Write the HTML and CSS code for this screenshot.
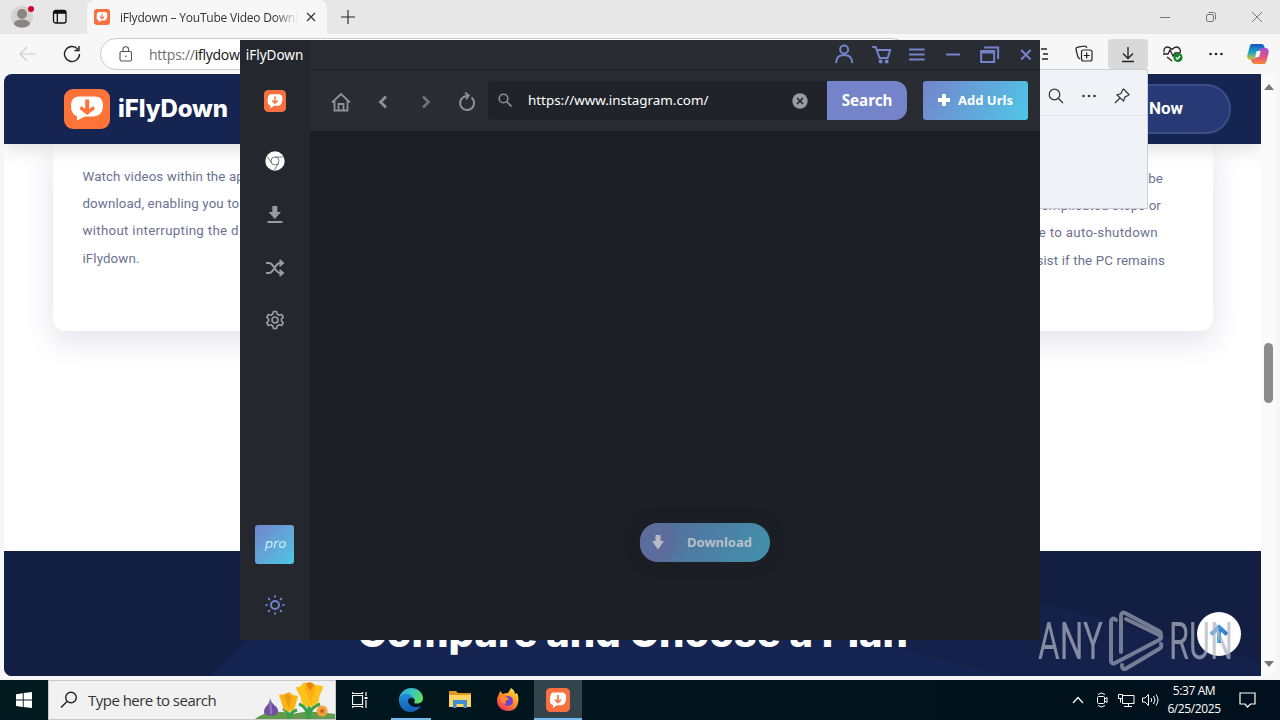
FILE: index.html
```html
<!DOCTYPE html>
<html lang="en">
<head>
<meta charset="utf-8">
<title>iFlyDown</title>
<link rel="stylesheet" href="styles.css">
</head>
<body>
<svg class="defs" width="0" height="0">
  <defs>
    <symbol id="logo" viewBox="0 0 46 40">
      <rect width="46" height="40" rx="9" fill="#ff7338"/>
      <path d="M15 7.500h16c5 0 8 3 8 9 0 7-4 11-10 11h-8L13 31.500V27C9 26 7 22 7 17c0-6 3-9.500 8-9.500z" fill="#fff"/>
      <path d="M21.200 10.500h4v9.500l4-3 1.800 3-7.800 6-7.700-6 1.700-3 4 3z" fill="#ff7338"/>
    </symbol>
    <symbol id="logo-sq" viewBox="0 0 24 24">
      <rect width="24" height="24" rx="4.500" fill="#f8703f"/>
      <path d="M8 4.500h8c3.500 0 4.500 2.500 4 6.500s-2 6.300-5 6.300h-4L7 20v-3C4 16 3.500 13.500 4 10s1.200-5.500 4-5.500z" fill="#fff"/>
      <path d="M12 7v7M9 11.500l3 3 3-3" fill="none" stroke="#f8703f" stroke-width="1.600"/>
    </symbol>
    <linearGradient id="cop1" x1="0" y1="0" x2="0" y2="1"><stop offset="0" stop-color="#1b4fc4"/><stop offset=".5" stop-color="#16a5c9"/><stop offset="1" stop-color="#e5c22e"/></linearGradient>
    <linearGradient id="cop2" x1="0" y1="0" x2="0" y2="1"><stop offset="0" stop-color="#a34fd6"/><stop offset=".6" stop-color="#e8547d"/><stop offset="1" stop-color="#f68a35"/></linearGradient>
    <linearGradient id="edge1" x1="0" y1="0" x2="1" y2=".4"><stop offset="0" stop-color="#2aa5dc"/><stop offset=".6" stop-color="#38c9b5"/><stop offset="1" stop-color="#62dc62"/></linearGradient>
    <linearGradient id="edge2" x1="0" y1="0" x2="0" y2="1"><stop offset="0" stop-color="#1f8edb"/><stop offset="1" stop-color="#145eb4"/></linearGradient>
    <linearGradient id="fox" x1=".9" y1="0" x2=".2" y2="1"><stop offset="0" stop-color="#fff04a"/><stop offset=".45" stop-color="#ff9626"/><stop offset="1" stop-color="#f0305f"/></linearGradient>
    <linearGradient id="up" x1="0" y1="0" x2="1" y2="0"><stop offset="0" stop-color="#54b5ec"/><stop offset="1" stop-color="#2b78d4"/></linearGradient>
  </defs>
</svg>
<div class="desktop">
  <section class="browser">
    <header class="tabs">
      <svg class="avatar" width="26" height="26" viewBox="0 0 26 26"><circle cx="12" cy="13" r="11" fill="#d5d3d1"/><circle cx="12" cy="10" r="5" fill="#898582"/><ellipse cx="12" cy="19.500" rx="8" ry="4" fill="#898582"/><circle cx="21" cy="5" r="3" fill="#d2062c"/></svg>
      <svg class="workspaces" width="16" height="16" viewBox="0 0 16 16" fill="none" stroke="#111" stroke-width="1.300"><rect x="1.500" y="1.500" width="12.500" height="12.500" rx="2"/><path d="M2 4h12M5.300 4v10M2 2.500h12" /></svg>
      <div class="tab">
        <svg width="16" height="16"><use href="#logo-sq"/></svg>
        <span class="tab-title">iFlydown – YouTube Video Downl</span>
        <svg class="tab-close" width="10" height="10" viewBox="0 0 10 10" stroke="#333" stroke-width="1.200"><path d="M1 1l8 8M9 1l-8 8"/></svg>
      </div>
      <svg class="new-tab" width="14" height="14" viewBox="0 0 14 14" stroke="#222" stroke-width="1.100"><path d="M7 0v14M0 7h14"/></svg>
      <div class="window-buttons">
        <svg width="46" height="34" fill="none" stroke="#777"><path d="M18 17.500h10"/></svg>
        <svg width="46" height="34" fill="none" stroke="#777"><rect x="18.500" y="14.500" width="7" height="7" rx="1.500"/><path d="M20.500 12.500h5a2 2 0 0 1 2 2v5"/></svg>
        <svg width="46" height="34" fill="none" stroke="#777"><path d="M18 12l10 10M28 12l-10 10"/></svg>
      </div>
    </header>
    <div class="toolbar">
      <svg class="back" width="18" height="16" viewBox="0 0 18 16" fill="none" stroke="#ccc" stroke-width="1.200"><path d="M17 8H1M8 1L1 8l7 7"/></svg>
      <svg class="refresh" width="18" height="18" viewBox="0 0 18 18" fill="none" stroke="#222" stroke-width="1.400"><path d="M16.500 9A7.500 7.500 0 1 1 14.800 4.300M16 1v4.500h-4.500"/></svg>
      <div class="address">
        <svg width="14" height="16" viewBox="0 0 14 16" fill="none" stroke="#555" stroke-width="1.100"><rect x="1" y="5.500" width="11.500" height="9.500" rx="1.500"/><path d="M4 5.500V3.500a2.800 2.800 0 0 1 5.600 0v2"/><circle cx="6.800" cy="10.200" r=".7" fill="#333" stroke="none"/></svg>
        <span><i>https://</i>iflydow</span>
      </div>
      <div class="actions">
        <svg width="44" height="30" fill="none" stroke="#222" stroke-width="1.300"><path d="M15 9l7 10M23 10h6M25 15h5M24 20h6"/></svg>
        <svg width="44" height="30" fill="none" stroke="#222" stroke-width="1.200"><path d="M18 20l-2-1.500L14 10.500c-.3-1.200.5-2 2-2.300l6.500-1.200c1.500 0 2 .7 2.300 2"/><rect x="19.500" y="11" width="10.500" height="11" rx="2"/><path d="M24.700 13.500v6M21.700 16.500h6"/></svg>
        <div class="active"><svg width="40" height="30" fill="none" stroke="#222" stroke-width="1.300"><path d="M20 8v11M15 14.500l5 5 5-5M14 22.500h12"/></svg></div>
        <svg width="44" height="30" fill="none" stroke="#222" stroke-width="1.300"><path d="M22 22l-5-4M30 14c1.500-3-1-6-3.500-6-2 0-3 1-4.500 2.500C20.500 9 19.500 8 17.500 8c-2.500 0-4.500 2.500-3.300 5.500M13 15h5l2-4 3 6 2-3h5"/><circle cx="28" cy="18.500" r="4.600" fill="#16822a" stroke="none"/><path d="M25.800 18.500l1.600 1.500 2.700-3" stroke="#fff"/></svg>
        <svg width="44" height="30" fill="#222"><circle cx="16.500" cy="15" r="1.300"/><circle cx="22" cy="15" r="1.300"/><circle cx="27.500" cy="15" r="1.300"/></svg>
        <svg width="40" height="30" viewBox="0 0 40 30"><path d="M14 5h9c2 0 3 1 3.500 3l.5 2h-3c-2 0-3 1-3.500 3l-2 6c-.6 1.500-1.500 2-3 2h-2c-3.500 0-5-2-4-5.500l2-7C12 6 12.500 5 14 5z" fill="url(#cop1)"/><path d="M26 25h-9c-2 0-3-1-3.500-3l-.5-2h3c2 0 3-1 3.500-3l2-6c.6-1.500 1.500-2 3-2h2c3.500 0 5 2 4 5.500l-2 7c-.5 2.500-1 3.500-2.500 3.500z" fill="url(#cop2)"/><path d="M18.700 12h4l-1.600 6h-4z" fill="#f7f7f7"/></svg>
      </div>
    </div>
    <div class="viewport">
      <div class="page">
        <div class="site-head">
          <svg width="46" height="40"><use href="#logo"/></svg>
          <b>iFlyDown</b>
          <div class="cta">Now</div>
        </div>
        <div class="cards">
          <p class="card-left">Watch videos within the ap<br>download, enabling you to<br><span class="wide">without interrupting the d</span><br>iFlydown.</p>
          <p class="card-right"><span class="in-2">be</span><span class="in-4">complicated steps or</span><span class="in-7 wide">e to auto-shutdown</span><span>sist if the PC remains</span></p>
        </div>
        <div class="plans"><h2>Compare and Choose a Plan</h2></div>
      </div>
      <div class="scrollbar">
        <svg width="10" height="6"><path d="M0 6l5-6 5 6z" fill="#777"/></svg>
        <div class="thumb"></div>
        <svg width="10" height="6"><path d="M0 0l5 6 5-6z" fill="#777"/></svg>
      </div>
    </div>
  </section>

  <aside class="flyout">
    <svg width="16" height="16" viewBox="0 0 16 16" fill="none" stroke="#333" stroke-width="1.200"><circle cx="6.500" cy="6.500" r="5.300"/><path d="M10.500 10.500l4.500 4.500"/></svg>
    <svg width="16" height="16" fill="#333"><circle cx="2.500" cy="8" r="1.300"/><circle cx="8" cy="8" r="1.300"/><circle cx="13.500" cy="8" r="1.300"/></svg>
    <svg width="16" height="16" viewBox="0 0 16 16" fill="none" stroke="#333" stroke-width="1.200"><path d="M9.500 1L15 6.500l-1 1-3 1.500-1.500 4L3 7l4-1.500L8.500 2zM6 10l-5 5"/></svg>
  </aside>

  <section class="app">
    <nav class="side">
      <span class="app-name">iFlyDown</span>
      <svg class="side-logo" width="22" height="22"><use href="#logo-sq"/></svg>
      <svg class="side-chrome" width="20" height="20" viewBox="0 0 20 20"><circle cx="10" cy="10" r="9.700" fill="#fff"/><g fill="none" stroke="#555b63" stroke-width=".8"><circle cx="10" cy="10" r="4"/><path d="M10 6h8.500M6.500 12L2.500 5.500M13.500 12L9.500 19"/></g></svg>
      <svg class="side-down" width="16" height="18" viewBox="0 0 16 18" fill="#989ba1"><path d="M5.300 0h5v6H14l-6.200 7L1.600 6h3.700zM.5 15h15v2H.5z"/></svg>
      <svg class="side-shuffle" width="20" height="18" viewBox="0 0 20 18" fill="none" stroke="#989ba1" stroke-width="2"><path d="M1 4h3c5 0 6 10 11 10h2M1 14h3c5 0 6-10 11-10h2M14.500 1l3.500 3-3.500 3M14.500 11l3.500 3-3.500 3"/></svg>
      <svg class="side-gear" width="20" height="20" viewBox="0 0 20 20" fill="none" stroke="#989ba1" stroke-width="1.700"><path d="M8.500 1.500h3l.7 2.500 2 1.200 2.500-.7 1.500 2.600L16.500 9v2l1.700 1.900-1.500 2.600-2.500-.7-2 1.200-.7 2.500h-3L7.800 16l-2-1.200-2.500.7-1.500-2.600L3.500 11V9L1.800 7.100l1.500-2.600 2.500.7L7.800 4z" stroke-linejoin="round"/><circle cx="10" cy="10" r="3"/></svg>
      <div class="pro">pro</div>
      <svg class="side-sun" width="20" height="20" viewBox="-10 -10 20 20" fill="none" stroke="#7483cd" stroke-width="2" stroke-linecap="round"><circle r="4"/><path d="M0-8.700v.5M0 8.200v.5M-8.700 0h.5M8.200 0h.5M-6.200-6.200l.5.500M5.700 5.700l.5.500M6.200-6.200l-.5.500M-5.700 5.700l-.5.500"/></svg>
    </nav>
    <div class="main">
      <div class="titlebar">
        <svg viewBox="0 0 36 28"><circle cx="18" cy="9.500" r="4"/><path d="M10 23c0-5 3-8 8-8s8 3 8 8"/></svg>
        <svg viewBox="0 0 36 28"><path d="M9 7h3.500l4 11h8L27 10H13.500"/><circle cx="17.500" cy="21.500" r="1"/><circle cx="23.500" cy="21.500" r="1"/></svg>
        <svg viewBox="0 0 36 28"><path d="M10 9.500h15.500M10 14.500h15.500M10 19.500h15.500"/></svg>
        <svg viewBox="0 0 36 28"><path d="M11 14.500h14"/></svg>
        <svg viewBox="0 0 36 28"><rect x="10" y="11" width="13" height="11"/><path d="M10 12.500h13M13 7.500h14V19"/></svg>
        <svg viewBox="0 0 36 28"><path d="M13 10l9.500 9.500M22.500 10L13 19.500"/></svg>
      </div>
      <div class="nav">
        <svg width="20" height="20" viewBox="0 0 20 20" fill="none" stroke="#8f9298" stroke-width="1.800"><path d="M1 10.500L10 2l9 8.500M3.500 9v9.500h13V9M7.500 18v-6h5v6"/></svg>
        <svg class="prev" width="10" height="14" viewBox="0 0 10 14" fill="none" stroke="#8f9298" stroke-width="2.800"><path d="M8 1.500L2.500 7 8 12.500"/></svg>
        <svg class="next" width="10" height="14" viewBox="0 0 10 14" fill="none" stroke="#70747a" stroke-width="2.600"><path d="M2 1.500L7.500 7 2 12.500"/></svg>
        <svg class="reload" width="18" height="20" viewBox="0 0 18 20" fill="none" stroke="#8f9298" stroke-width="2"><path d="M13.500 5.500A7 7 0 1 1 5.500 5L10 3.500"/><path d="M7 .5L11 3.500 8 7.500" stroke-width="1.600"/></svg>
        <div class="url">
          <svg width="14" height="14" viewBox="0 0 14 14" fill="none" stroke="#8b8e93" stroke-width="1.600"><circle cx="5.500" cy="5.500" r="4.300"/><path d="M8.500 8.500l5 5"/></svg>
          <span>https://www.instagram.com/</span>
          <svg class="clear" width="16" height="16" viewBox="0 0 16 16"><circle cx="8" cy="8" r="7.700" fill="#9a9ca1"/><path d="M5 5l6 6M11 5l-6 6" stroke="#20232a" stroke-width="1.600"/></svg>
        </div>
        <div class="search">Search</div>
        <div class="add"><svg width="12" height="12" stroke="#fff" stroke-width="3.800"><path d="M6 0v12M0 6h12"/></svg>Add Urls</div>
      </div>
      <div class="content">
        <div class="download"><span class="knob"><svg width="12" height="15" viewBox="0 0 12 15" fill="#b7bbc3"><path d="M3.500 0h5v6H12l-6 8.500L0 6h3.500z"/></svg></span><b>Download</b></div>
      </div>
    </div>
  </section>

  <div class="to-top"><svg width="20" height="20" viewBox="0 0 20 20" fill="none" stroke="url(#up)" stroke-width="4"><path d="M2 10.500L10 3l8 7.500"/><path d="M10 5l.01 14"/></svg></div>
  <svg class="watermark" width="200" height="66" viewBox="0 0 200 66">
    <g class="mark-text"><text x="2" y="53" textLength="65" lengthAdjust="spacingAndGlyphs">ANY</text><text x="133" y="53" textLength="64" lengthAdjust="spacingAndGlyphs">RUN</text></g>
    <g fill="none" stroke="#9ba1b4" stroke-width="4" stroke-linejoin="round" stroke-linecap="round"><path d="M80 14c-3-3-5-1-5 2v39c0 2 2 3 4 2l44-23c3-2 3-4 0-5L90 13"/><path d="M85 46V10c0-3 2-4 4-3l34 18c2 1 2 3 1 5M86 59c0 4 2 5 5 3l32-19c2-1 3-3 2-5"/></g>
  </svg>

  <footer class="taskbar">
    <div class="start"><svg width="16" height="16" fill="#fff"><path d="M0 2.200L6.800 1.200v6.400H0zM7.700 1L16 0v7.600H7.700zM0 8.500h6.800v6.400L0 13.900zM7.700 8.500H16V16l-8.300-1z"/></svg></div>
    <div class="find">
      <svg width="18" height="18" viewBox="0 0 18 18" fill="none" stroke="#222" stroke-width="1.400"><circle cx="11" cy="6.500" r="5.300"/><path d="M7 10.500L1 16.500"/></svg>
      <span>Type here to search</span>
      <svg class="flowers" width="80" height="38" viewBox="0 0 80 38"><path d="M0 38c10-8 25-9 38-5 14-4 30-2 42 0v5z" fill="#629a4e"/><path d="M15 17c1 7 9 8 8 14-1 5-14 5-14 0 0-6 6-7 6-14z" fill="#7051a0"/><path d="M15 20c0 5 2 8 1 13" stroke="#9878bd" stroke-width="2" fill="none"/><path d="M34 38c0-6-2-8-6-10M34 38c1-6 4-8 8-9M53 38c0-9-3-13-9-15M53 38c1-9 5-13 12-15M54 20v18" stroke="#36a04a" stroke-width="3" fill="none"/><path d="M24 14l6-1 4-2 4 3 5 1-3 11c-1 6-11 6-12 0z" fill="#f8b515"/><path d="M29 15l4-3 4 4-3 11z" fill="#ef9a12"/><path d="M41 6c3 0 5 0 7-4l7-1 6 3 7 1c0 6-4 7-4 14-2 9-18 9-18-1-1-5-4-6-5-12z" fill="#fbc21b"/><path d="M49 6l5-4 7 4-5 16z" fill="#fcae13"/><path d="M51 3l4-2 4 3-4 6z" fill="#e98016"/><circle cx="67" cy="30" r="5.500" fill="#f5a13b"/><circle cx="67" cy="30" r="2" fill="#bd6719"/></svg>
    </div>
    <div class="task"><svg width="16" height="16" viewBox="0 0 16 16" fill="none" stroke="#f2f2f2" stroke-width="1.200"><path d="M.5 3.500h10v9H.5zM.5 0v1.500h10V0M.5 16v-1.500h10V16M14 0v4M14 8v8"/><path d="M12.500 5h3v2h-3z" fill="#fff" stroke="none"/></svg></div>
    <div class="task running edge"><svg width="24" height="24" viewBox="0 0 24 24"><path d="M0 12C0 5 6 0 12 0c7 0 12 5 12 10 0 5-5 6.500-9 5 2-3 0-6-4-6-5 0-9 4-7 9-2-2-4-4-4-6z" fill="url(#edge1)"/><path d="M0 12c1-4 5-7 9-6 3 0 5 3 5 5-2-2-5-1-5 2 0 4 6 8 13 5-3 4-7 6-11 6C5 24 0 19 0 12z" fill="url(#edge2)"/></svg></div>
    <div class="task"><svg width="22" height="20" viewBox="0 0 22 20"><path d="M0 1h7l2 2h13v3H0z" fill="#dd9a22"/><path d="M0 5h22v12H0z" fill="#fbd667"/><path d="M4 10h14v8h-3.500v-4h-7v4H4z" fill="#3b8fd2"/></svg></div>
    <div class="task"><svg width="24" height="24" viewBox="0 0 24 24"><path d="M3 6l1-3 3 3c2-1 3-1 5-1l3-5c3 2 4 4 4 6l2-1c3 6 2 18-9 18C3 23-2 14 3 6z" fill="url(#fox)"/><circle cx="12" cy="13" r="5" fill="#7341ce"/><path d="M5 8l6 1 2 3c-4 0-4 2-3 4-4 0-6-4-5-8z" fill="#ff8b2a"/></svg></div>
    <div class="task running current"><svg width="24" height="24"><use href="#logo-sq"/></svg></div>
    <div class="tray">
      <svg width="12" height="8" fill="none" stroke="#fff" stroke-width="1.200"><path d="M1 7l5-5.500L11 7"/></svg>
      <svg class="cam" width="12" height="16" fill="none" stroke="#fff"><rect x="1.500" y="4.500" width="7" height="7" rx="1"/><path d="M8.500 7l2.500-1.500v5L8.500 9M2 2.500Q5.500-.5 9 2.500M2 13.500q3.500 3 7 0"/></svg>
      <svg class="net" width="17" height="15" fill="none" stroke="#fff"><path d="M5 2.500h11v8H4.500V6M10.500 10.500v3M6 13.500h8M.5 1.500h4v4h-4zM2.500 5.500v4"/></svg>
      <svg class="vol" width="17" height="14" fill="none" stroke="#fff"><path d="M.5 5v4h2.500l3.500 3.500v-11L3 5zM9 5q1.500 2 0 4M11.500 3q3 4 0 8M14 1.500q4 5.500 0 11"/></svg>
      <div class="clock">5:37 AM<br>6/25/2025</div>
      <svg class="note" width="17" height="16" fill="none" stroke="#fff" stroke-width="1.200"><path d="M1 1h15v11h-4.500L8.500 15l-2.500-3H1z"/></svg>
    </div>
  </footer>
</div>
</body>
</html>
```
FILE: styles.css
```css
* { box-sizing: border-box; }
body { margin: 0; overflow: hidden; font-family: "Open Sans", "Noto Sans", sans-serif; }
svg { display: block; flex: none; }
.defs { position: absolute; }
.desktop { position: relative; width: 1280px; height: 720px; overflow: hidden; background: #f6f6f7; white-space: nowrap; }

.browser { height: 680px; display: flex; flex-direction: column; isolation: isolate; }
.tabs { height: 34px; background: #e7e7e7; display: flex; align-items: center; }
.avatar { margin-left: 10px; }
.workspaces { margin-left: 16px; }
.tab { width: 240px; height: 34px; margin-left: 19px; padding-left: 7px; display: flex; align-items: center; background: #f7f7f7; border-radius: 8px 8px 0 0; }
.tab-title { width: 180px; margin-left: 10px; overflow: hidden; font-size: 12px; letter-spacing: -.22px; color: #333; -webkit-mask-image: linear-gradient(90deg, #000 86%, transparent 99%); mask-image: linear-gradient(90deg, #000 86%, transparent 99%); }
.tab-close { margin-left: 6px; }
.new-tab { margin-left: 14px; }
.window-buttons { margin-left: auto; display: flex; }

.toolbar { height: 40px; background: #f7f7f7; display: flex; align-items: center; }
.back { margin-left: 19px; }
.refresh { margin-left: 26px; }
.address { width: 808px; height: 32px; margin-left: 19px; padding-left: 18px; display: flex; align-items: center; gap: 16px; background: #fff; border: 1px solid #ccc; border-radius: 16px; font-size: 14px; color: #111; letter-spacing: -.25px; }
.address i { font-style: normal; color: #707070; }
.actions { margin-left: 110px; display: flex; align-items: center; }
.active { width: 40px; height: 30px; margin: 0 2px; background: #d9d9d9; border-radius: 4px; }

.viewport { height: 602px; margin: 0 4px; display: flex; background: #fafafa; border-radius: 8px; overflow: hidden; }
.page { width: 1257px; background: #fff; font-family: Roboto, sans-serif; overflow: hidden; }
.site-head { position: relative; z-index: 1; height: 70px; padding: 0 30px 0 60px; display: flex; align-items: center; background: #152451; color: #fff; box-shadow: 0 4px 20px rgba(0,0,0,.14); }
.site-head b { margin: -2px 0 0 8px; font-family: Inter, sans-serif; font-size: 24px; font-weight: 800; letter-spacing: -.1px; }
.cta { width: 190px; height: 50px; margin-left: auto; padding-right: 46px; border: 2px solid #3b4d87; border-radius: 25px; background: #283a75; font-size: 17px; font-weight: 700; line-height: 45px; text-align: right; }
.cards { height: 187px; width: 1160px; margin-left: 49px; padding: 19px 29px; display: flex; background: #fff; border-radius: 0 0 12px 12px; box-shadow: 0 10px 30px rgba(30,30,90,.13); }
.cards p { margin: 0; font-size: 13.300px; line-height: 27.200px; letter-spacing: .12px; color: #6b7290; }
.cards .wide { letter-spacing: .3px; }
.card-left { width: 500px; padding-left: .5px; }
.card-right { width: 250px; padding: 2px 19px 0 0; display: flex; flex-direction: column; text-align: right; }
.cards .card-right { margin-left: auto; }
.in-2 { padding-right: 2px; }
.in-4 { padding-right: 4px; }
.in-7 { padding-right: 7px; }
.plans { height: 125px; margin-top: 220px; padding-top: 58px; background: linear-gradient(315deg, transparent 0 76%, #131f42 76%), linear-gradient(195deg, #131f42 0 24%, #14214a 24% 42%, #152450 42%); }
.plans h2 { margin: 0; text-align: center; font-family: Inter, sans-serif; font-size: 40px; line-height: 48px; font-weight: 800; letter-spacing: -.04px; color: #fff; }
.scrollbar { width: 15px; padding: 10px 0 9px; display: flex; flex-direction: column; align-items: center; }
.thumb { width: 9px; height: 60px; margin: 253px 0 auto; border-radius: 5px; background: #8b8b8b; }

.flyout { position: absolute; left: 908px; top: 69px; width: 240px; height: 140px; padding: 18px 17px 0; display: flex; justify-content: flex-end; gap: 17px; background: linear-gradient(#dfe4ea, #dfe4ea) 0 45px / 100% 1px no-repeat, #eff3f7; border: 1px solid #ccd0d5; }

.app { position: absolute; left: 240px; top: 40px; width: 800px; height: 600px; display: flex; background: #1b1e25; font-family: "Noto Sans", sans-serif; }
.side { width: 70px; background: #24282e; display: flex; flex-direction: column; align-items: center; padding-right: 1px; }
.app-name { height: 30px; line-height: 30px; font-size: 13.500px; color: #fff; }
.side-logo { margin-top: 20px; }
.side-chrome { margin-top: 39px; }
.side-down { margin-top: 35px; }
.side-shuffle { margin-top: 35px; }
.side-gear { margin-top: 33px; }
.pro { width: 39px; height: 39px; margin-top: 195px; border-radius: 3px; background: linear-gradient(135deg, #7484cb, #4ec7e5); color: #c9eefa; font: italic 500 13px/38px "DejaVu Sans", sans-serif; text-align: center; padding-left: 2px; }
.side-sun { margin-top: 31px; }
.main { width: 730px; }
.titlebar { height: 30px; display: flex; justify-content: flex-end; background: #292d33; border-bottom: 1px solid #1c1f25; overflow: hidden; }
.titlebar svg { width: 36.300px; height: 28px; fill: none; stroke: #7483cb; stroke-width: 2; }
.titlebar svg:last-child { margin-right: -4px; }
.nav { height: 61px; padding: 0 12px 0 21px; display: flex; align-items: center; background: #292d33; }
.nav > * { flex: none; }
.nav > svg { margin-top: 3px; }
.prev { margin-left: 27px; }
.next { margin-left: 33px; }
.reload { margin-left: 27px; }
.url { width: 339px; height: 39px; margin-left: 12px; padding: 0 19px 0 10px; display: flex; align-items: center; background: #20232a; border-radius: 4px 0 0 4px; color: #fff; font-size: 13.400px; }
.url svg, .url span { margin-top: -2px; }
.url span { margin-left: 16px; }
.url .clear { margin: 0 0 0 auto; }
.search { width: 80px; height: 39px; border-radius: 0 12px 12px 0; background: #7583c8; color: #fff; font-size: 15.200px; font-weight: 700; line-height: 39px; text-align: center; }
.add { width: 105px; height: 39px; margin-left: 16px; padding-bottom: 2px; display: flex; align-items: center; justify-content: center; gap: 8px; border-radius: 3px; background: linear-gradient(120deg, #7484cc, #4fc7e6); color: #fff; font-size: 13px; font-weight: 700; }
.content { height: 509px; padding: 392px 0 0 330px; }
.download { width: 130px; height: 39px; display: flex; align-items: center; gap: 11px; border-radius: 20px; background: linear-gradient(120deg, #596899, #438eab 90%); box-shadow: 0 0 14px #1d2022; color: #b7bfc8; font-size: 13px; }
.knob { width: 36px; height: 39px; display: flex; align-items: center; justify-content: center; border-radius: 20px; background: #5c6c9c; }
.download b { margin-top: -2px; }

.to-top { position: absolute; left: 1197px; top: 612px; width: 44px; height: 44px; display: flex; align-items: center; justify-content: center; border-radius: 50%; background: #fff; }
.watermark { position: absolute; left: 1036px; top: 606px; opacity: .72; }
.mark-text { fill: #b1b5c2; font: 400 51px Roboto, sans-serif; }

.taskbar { height: 40px; display: flex; background: #01141b linear-gradient(90deg, #02191f, #01101c); color: #fff; }
.start { width: 48px; display: flex; align-items: center; justify-content: center; }
.find { width: 288px; padding-left: 11px; display: flex; align-items: center; background: #f1f1f1; border: 1px solid #c9c9c9; color: #333; font-size: 15px; letter-spacing: -.52px; }
.find span { margin-left: 10px; }
.flowers { margin-left: auto; }
.task { width: 48px; display: flex; align-items: center; justify-content: center; }
.running { width: 48px; border-bottom: 2px solid #76b9ed; padding-top: 2px; }
.edge { width: 40px; margin: 0 5px 0 7px; }
.task.current { background: #34444d; margin-left: 2px; }
.tray { margin-left: auto; display: flex; align-items: center; }
.cam { margin-left: 12px; }
.net { margin-left: 10px; }
.vol { margin-left: 7px; }
.clock { width: 56px; margin-left: 7px; font-size: 12px; line-height: 18px; letter-spacing: -.4px; text-align: center; }
.note { margin: 0 24px 0 17px; }
```
